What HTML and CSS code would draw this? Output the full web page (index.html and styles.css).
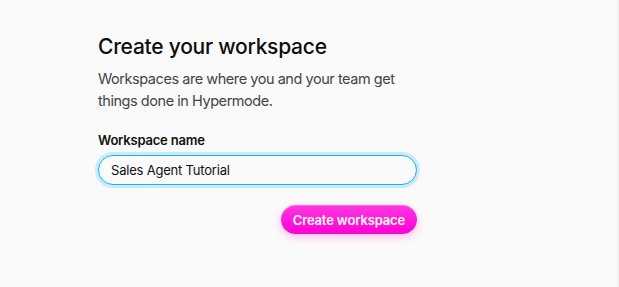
FILE: index.html
```html
<!DOCTYPE html>
<html>
<head>
<meta charset="utf-8">
<link rel="stylesheet" href="styles.css">
</head>
<body>
<div class="page">
  <main class="card">
    <h1 class="title">Create your workspace</h1>
    <p class="subtitle">Workspaces are where you and your team get things done in Hypermode.</p>
    <form class="form">
      <label class="label" for="ws">Workspace name</label>
      <input class="input" id="ws" type="text" value="Sales Agent Tutorial">
      <div class="actions">
        <button class="btn" type="button">Create workspace</button>
      </div>
    </form>
  </main>
  <div class="edge"></div>
</div>
</body>
</html>
```
FILE: styles.css
```css
html, body {
  margin: 0;
  padding: 0;
  height: 100%;
}
body {
  background: #fafafa;
  font-family: Inter, "Noto Sans", sans-serif;
  color: #111;
}
.page {
  display: flex;
  height: 100%;
}
.card {
  flex: 1;
  padding: 33px 0 0 98px;
}
.title {
  margin: 0;
  font-size: 21px;
  line-height: 28px;
  font-weight: 500;
  letter-spacing: -0.25px;
  color: #0d0d0d;
}
.subtitle {
  margin: 7px 0 0;
  width: 320px;
  font-size: 14.5px;
  line-height: 22px;
  letter-spacing: -0.45px;
  color: #444;
}
.form {
  display: flex;
  flex-direction: column;
  width: 319px;
  margin-top: 19px;
}
.label {
  font-size: 13px;
  font-weight: 600;
  line-height: 18px;
  letter-spacing: -0.2px;
  color: #111;
}
.input {
  margin-top: 6px;
  height: 30px;
  box-sizing: border-box;
  border: 1.5px solid #1ab0f5;
  border-radius: 15px;
  background: #fafafa;
  padding: 0 12px;
  font-family: inherit;
  font-size: 13px;
  letter-spacing: -0.2px;
  color: #111;
  box-shadow: 0 0 0 3px #c9ebfb;
  outline: none;
}
.actions {
  display: flex;
  justify-content: flex-end;
  margin-top: 20px;
}
.btn {
  height: 29px;
  padding: 0 12px;
  border: none;
  border-radius: 15px;
  background: linear-gradient(#ff38e0, #ff00d4);
  color: #fff;
  font-family: inherit;
  font-size: 13px;
  font-weight: 600;
  letter-spacing: -0.15px;
  box-shadow: 0 3px 8px rgba(255, 0, 200, 0.25), inset 0 1px 0 rgba(255,255,255,0.25);
}
.edge {
  width: 2px;
  background: #f1f1f1;
}
```
